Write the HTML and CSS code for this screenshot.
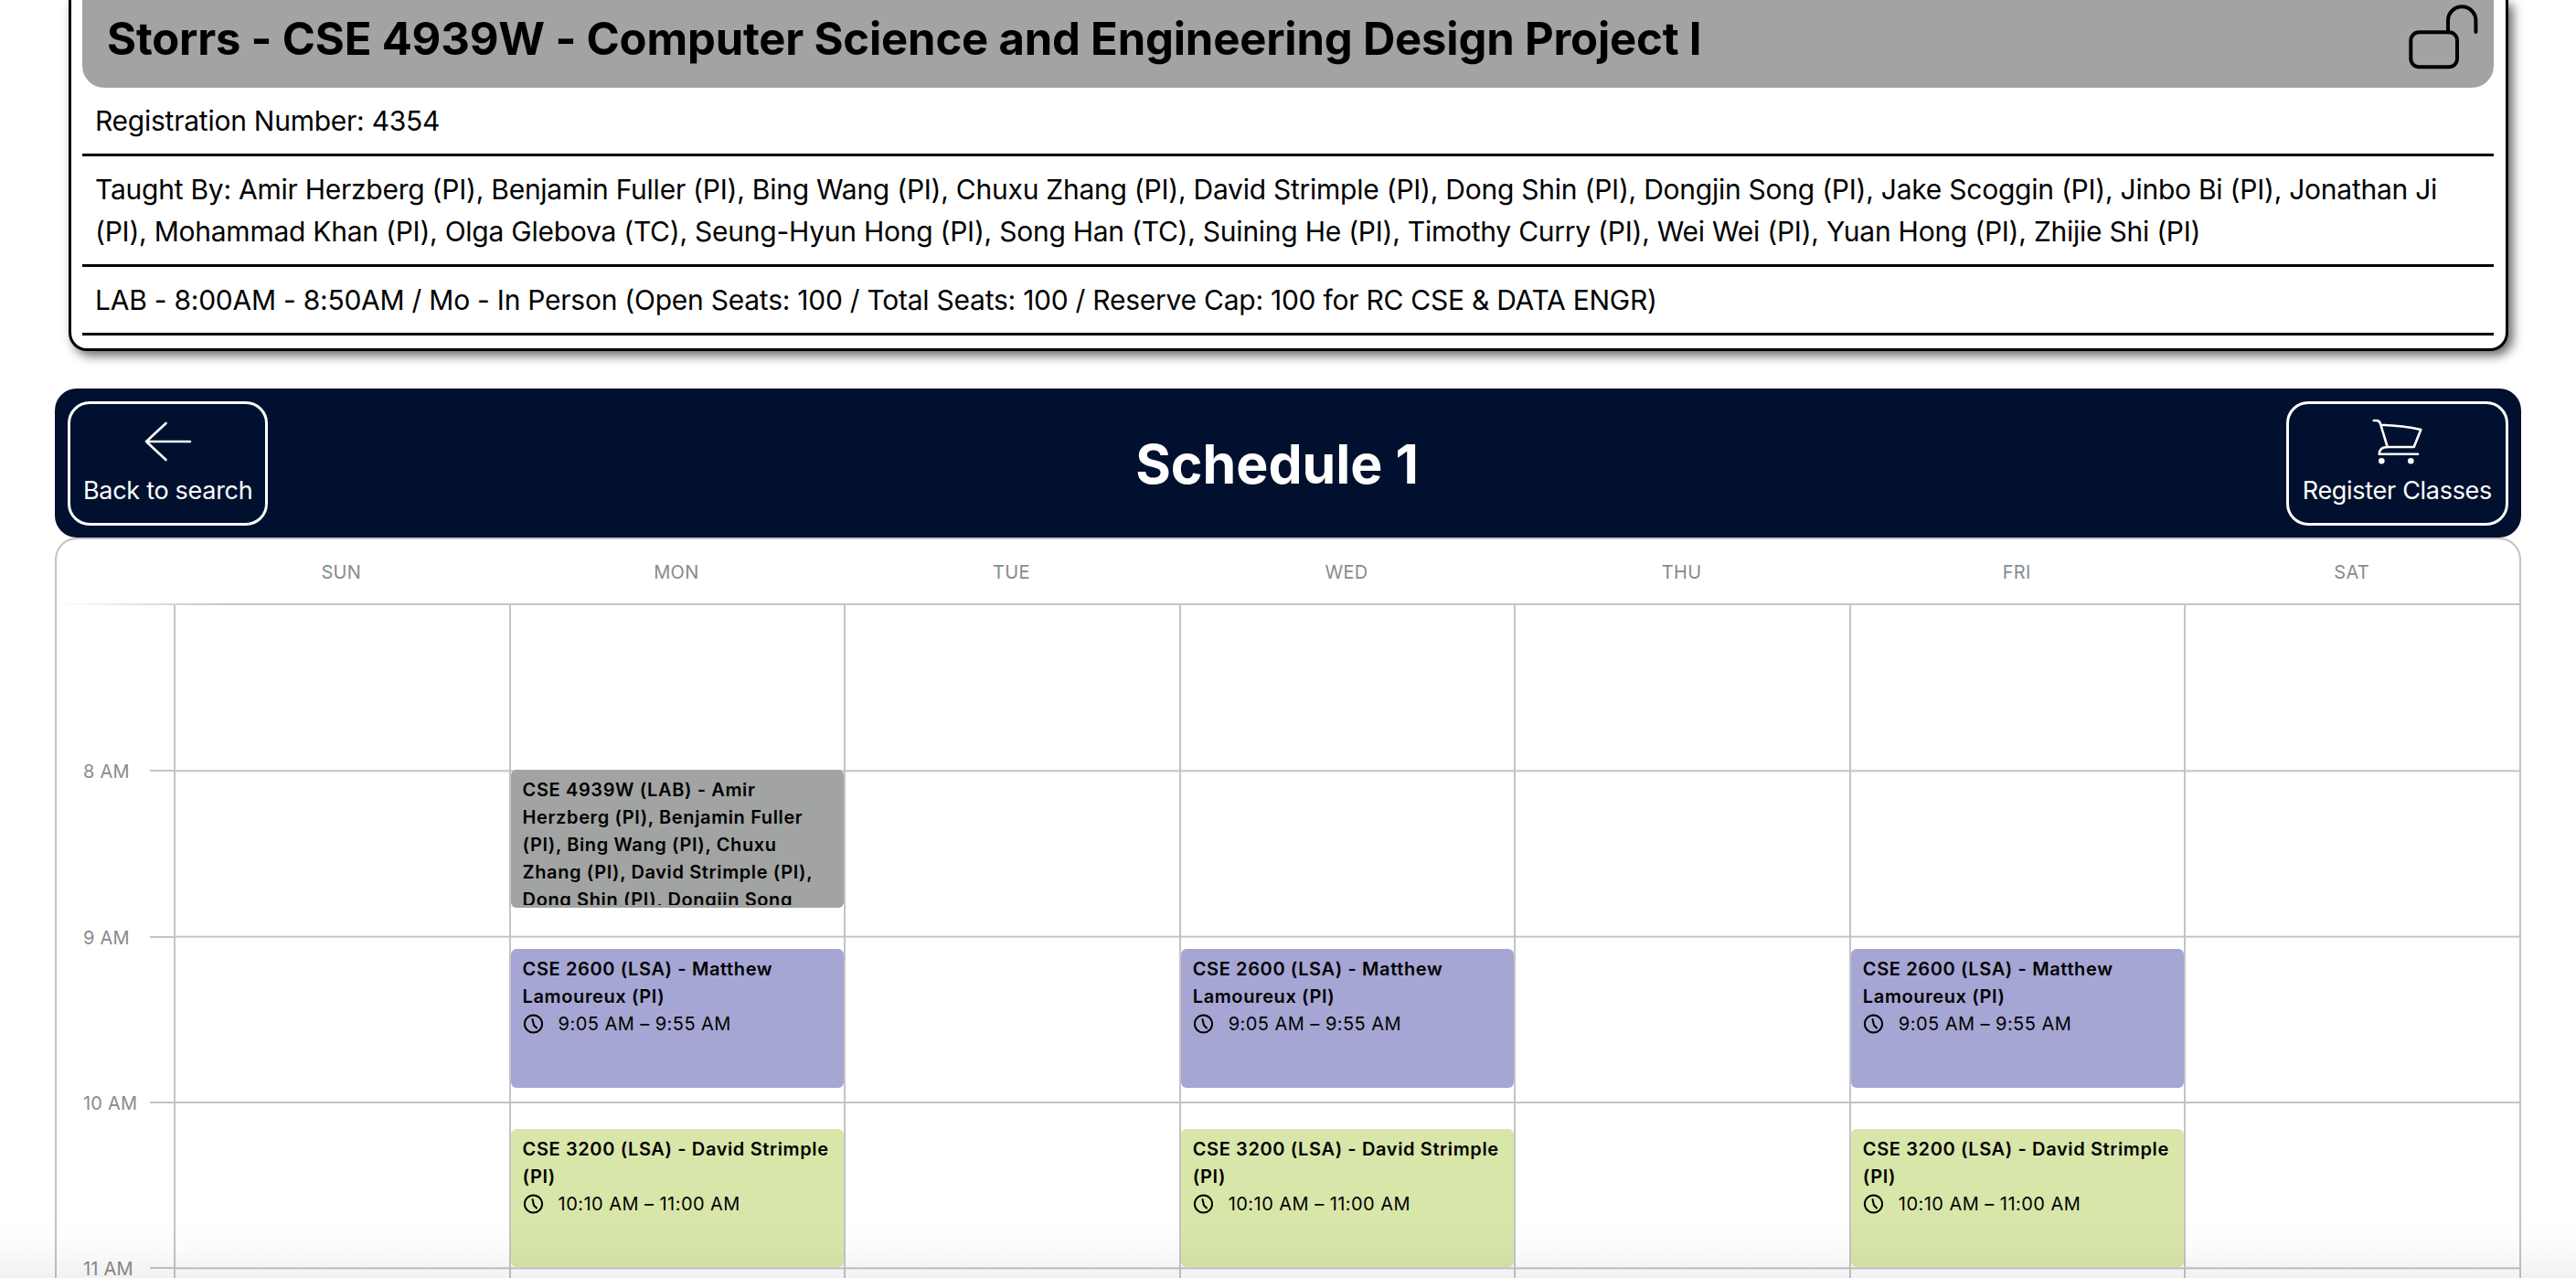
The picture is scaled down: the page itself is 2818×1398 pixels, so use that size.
FILE: index.html
```html
<!DOCTYPE html>
<html lang="en">

<head>
    <meta charset="UTF-8">
    <title>Schedule 1</title>
    <link rel="stylesheet" href="styles.css">
</head>

<body>
    <div class="page">
        <!-- course details -->
        <div class="course-card">
            <div class="course-head">
                <h2 class="course-title">Storrs - CSE 4939W - Computer Science and Engineering Design Project I</h2>
                <svg class="lock-icon" width="82" height="80" viewBox="0 0 82 80" fill="none" stroke="#000" stroke-width="4" stroke-linecap="round">
                    <rect x="7.3" y="35.3" width="50.7" height="38" rx="9"></rect>
                    <path d="M48 35V22.5a15.2 15.2 0 0 1 30.4 0V35"></path>
                </svg>
            </div>
            <div class="course-row">Registration Number: 4354</div>
            <div class="course-row">Taught By: Amir Herzberg (PI), Benjamin Fuller (PI), Bing Wang (PI), Chuxu Zhang (PI), David Strimple (PI), Dong Shin (PI), Dongjin Song (PI), Jake Scoggin (PI), Jinbo Bi (PI), Jonathan Ji (PI), Mohammad Khan (PI), Olga Glebova (TC), Seung-Hyun Hong (PI), Song Han (TC), Suining He (PI), Timothy Curry (PI), Wei Wei (PI), Yuan Hong (PI), Zhijie Shi (PI)</div>
            <div class="course-row">LAB - 8:00AM - 8:50AM / Mo - In Person (Open Seats: 100 / Total Seats: 100 / Reserve Cap: 100 for RC CSE &amp; DATA ENGR)</div>
        </div>

        <!-- schedule bar -->
        <div class="schedule-bar">
            <a class="bar-btn" href="#">
                <svg width="64" height="56" viewBox="0 0 64 56" fill="none" stroke="#fff" stroke-width="2.6" stroke-linecap="round" stroke-linejoin="round">
                    <path d="M8 29H56M29.5 9L8 29L29.5 49"></path>
                </svg>
                <span>Back to search</span>
            </a>
            <h1 class="schedule-title">Schedule 1</h1>
            <a class="bar-btn" href="#">
                <svg width="64" height="56" viewBox="0 0 64 56" fill="none" stroke="#fff" stroke-width="2.6" stroke-linecap="round" stroke-linejoin="round">
                    <path d="M6.7 6H9.5Q13 6 14 9.5L21.7 35H50.7L58.3 16Q40 11.5 14.5 10.7"></path>
                    <path d="M21.7 35Q13 35 12.7 42.7H55"></path>
                    <circle cx="15.3" cy="50.3" r="3.3" fill="#fff" stroke="none"></circle>
                    <circle cx="47.3" cy="50.3" r="3.3" fill="#fff" stroke="none"></circle>
                </svg>
                <span>Register Classes</span>
            </a>
        </div>

        <!-- calendar -->
        <div class="calendar">
            <div class="day-head">
                <div></div>
                <div>Sun</div>
                <div>Mon</div>
                <div>Tue</div>
                <div>Wed</div>
                <div>Thu</div>
                <div>Fri</div>
                <div>Sat</div>
            </div>
            <div class="week">
                <div class="hours">
                    <div class="hour"></div>
                    <div class="hour"><span>8 AM</span></div>
                    <div class="hour"><span>9 AM</span></div>
                    <div class="hour"><span>10 AM</span></div>
                    <div class="hour"><span>11 AM</span></div>
                </div>
                <div class="day"></div>
                <div class="day">
                    <div class="event ev-lab">
                        <div class="ev-title">CSE 4939W (LAB) - Amir Herzberg (PI), Benjamin Fuller (PI), Bing Wang (PI), Chuxu Zhang (PI), David Strimple (PI), Dong Shin (PI), Dongjin Song (PI), Jake Scoggin (PI)</div>
                    </div>
                    <div class="event ev-2600">
                        <div class="ev-title">CSE 2600 (LSA) - Matthew Lamoureux (PI)</div>
                        <div class="ev-time">
                            <svg class="clock" viewBox="0 0 22 22" fill="none" stroke="#000" stroke-width="2" stroke-linecap="round" stroke-linejoin="round"><circle cx="11.5" cy="11" r="9.6"></circle><path d="M10.5 6L12 12.5L15 15.5"></path></svg>
                            9:05 AM – 9:55 AM
                        </div>
                    </div>
                    <div class="event ev-3200">
                        <div class="ev-title">CSE 3200 (LSA) - David Strimple (PI)</div>
                        <div class="ev-time">
                            <svg class="clock" viewBox="0 0 22 22" fill="none" stroke="#000" stroke-width="2" stroke-linecap="round" stroke-linejoin="round"><circle cx="11.5" cy="11" r="9.6"></circle><path d="M10.5 6L12 12.5L15 15.5"></path></svg>
                            10:10 AM – 11:00 AM
                        </div>
                    </div>
                </div>
                <div class="day"></div>
                <div class="day">
                    <div class="event ev-2600">
                        <div class="ev-title">CSE 2600 (LSA) - Matthew Lamoureux (PI)</div>
                        <div class="ev-time">
                            <svg class="clock" viewBox="0 0 22 22" fill="none" stroke="#000" stroke-width="2" stroke-linecap="round" stroke-linejoin="round"><circle cx="11.5" cy="11" r="9.6"></circle><path d="M10.5 6L12 12.5L15 15.5"></path></svg>
                            9:05 AM – 9:55 AM
                        </div>
                    </div>
                    <div class="event ev-3200">
                        <div class="ev-title">CSE 3200 (LSA) - David Strimple (PI)</div>
                        <div class="ev-time">
                            <svg class="clock" viewBox="0 0 22 22" fill="none" stroke="#000" stroke-width="2" stroke-linecap="round" stroke-linejoin="round"><circle cx="11.5" cy="11" r="9.6"></circle><path d="M10.5 6L12 12.5L15 15.5"></path></svg>
                            10:10 AM – 11:00 AM
                        </div>
                    </div>
                </div>
                <div class="day"></div>
                <div class="day">
                    <div class="event ev-2600">
                        <div class="ev-title">CSE 2600 (LSA) - Matthew Lamoureux (PI)</div>
                        <div class="ev-time">
                            <svg class="clock" viewBox="0 0 22 22" fill="none" stroke="#000" stroke-width="2" stroke-linecap="round" stroke-linejoin="round"><circle cx="11.5" cy="11" r="9.6"></circle><path d="M10.5 6L12 12.5L15 15.5"></path></svg>
                            9:05 AM – 9:55 AM
                        </div>
                    </div>
                    <div class="event ev-3200">
                        <div class="ev-title">CSE 3200 (LSA) - David Strimple (PI)</div>
                        <div class="ev-time">
                            <svg class="clock" viewBox="0 0 22 22" fill="none" stroke="#000" stroke-width="2" stroke-linecap="round" stroke-linejoin="round"><circle cx="11.5" cy="11" r="9.6"></circle><path d="M10.5 6L12 12.5L15 15.5"></path></svg>
                            10:10 AM – 11:00 AM
                        </div>
                    </div>
                </div>
                <div class="day"></div>
            </div>
        </div>
        <div class="bottom-fade"></div>
    </div>
</body>

</html>
```

FILE: styles.css
```css
* {
    margin: 0;
    padding: 0;
    box-sizing: border-box;
}

body {
    background-color: #fff;
    font-family: Inter, "Liberation Sans", sans-serif;
    color: #000;
}

.page {
    position: relative;
    height: 1398px;
    padding: 0 60px;
    overflow: hidden;
}

/* course card */
.course-card {
    margin: 0 14px 41px 15px;
    height: 384px;
    padding: 0 13px 0 12px;
    background-color: #fff;
    border: 3px solid #000;
    border-top: 0;
    border-radius: 0 0 20px 20px;
    box-shadow: 5px 5px 12px rgba(0, 0, 0, .6);
}

.course-head {
    display: flex;
    justify-content: space-between;
    align-items: flex-start;
    height: 96px;
    padding: 0 16px 0 27px;
    background-color: #a2a4a3;
    border-radius: 0 0 24px 24px;
}

.course-title {
    margin-top: 17px;
    font-size: 49px;
    line-height: 52px;
    font-weight: 700;
    letter-spacing: -.19px;
}

.course-row {
    padding: 13px 14px;
    border-bottom: 3px solid #000;
    font-size: 30px;
    line-height: 46px;
    letter-spacing: -.25px;
}

/* schedule header */
.schedule-bar {
    display: flex;
    justify-content: space-between;
    align-items: center;
    height: 163px;
    padding: 0 14px;
    background-color: #00102e;
    border-radius: 24px;
}

.bar-btn {
    display: flex;
    flex-direction: column;
    align-items: center;
    justify-content: flex-end;
    height: 136px;
    padding: 0 14px 17px;
    border: 3px solid #fff;
    border-radius: 24px;
    color: #fff;
    font-size: 27px;
    line-height: 36px;
    letter-spacing: -.3px;
    text-decoration: none;
}

.bar-btn:last-child {
    padding: 0 15px 17px;
}

.bar-btn svg {
    margin-bottom: 9px;
}

.schedule-title {
    padding-top: 2px;
    color: #fff;
    font-size: 59px;
    font-weight: 700;
}

/* calendar */
.calendar {
    height: 830px;
    border: 2px solid #c4c4c4;
    border-bottom: 0;
    border-radius: 24px 24px 0 0;
}

.day-head {
    display: grid;
    grid-template-columns: 128px repeat(7, 1fr);
    align-items: center;
    height: 72px;
    padding-bottom: 1px;
    background-image: linear-gradient(to right, #fff, #c4c4c4 190px);
    background-size: 100% 2px;
    background-position: bottom;
    background-repeat: no-repeat;
    color: #8a8a8e;
    font-size: 20px;
    letter-spacing: .3px;
    text-align: center;
    text-transform: uppercase;
}

.week {
    display: grid;
    grid-template-columns: 128px repeat(7, 1fr);
}

.hour {
    position: relative;
    height: 181.33px;
}

.hour:first-child {
    height: 180.33px;
}

.hour span {
    position: absolute;
    left: 29px;
    top: -11px;
    color: #8a8a8e;
    font-size: 20px;
    line-height: 26px;
    letter-spacing: .2px;
}

.hour::after {
    content: "";
    position: absolute;
    top: 0;
    left: 102px;
    right: 0;
    height: 2px;
    background-color: #c4c4c4;
}

.hour:first-child::after {
    display: none;
}

/* white strip keeps the hour line off the header line */
.day {
    position: relative;
    height: 800px;
    border-left: 2px solid #c4c4c4;
    background-image: linear-gradient(#fff, #fff), linear-gradient(#c4c4c4 2px, transparent 2px);
    background-size: 100% 1px, 100% 181.33px;
    background-position: 0 0, 0 180.33px;
    background-repeat: no-repeat, repeat-y;
}

/* placed by start time, 181.33px to the hour */
.event {
    position: absolute;
    left: 0;
    right: 0;
    padding: 7px 13px 3px;
    border-radius: 6px;
    overflow: hidden;
    font-size: 20px;
    line-height: 30px;
    letter-spacing: .45px;
}

.ev-title {
    font-weight: 600;
    letter-spacing: .62px;
    height: 100%;
    overflow: hidden;
}

.ev-lab {
    top: 180px;
    height: 151px;
    background-color: #a2a4a3;
}

.ev-2600 {
    top: 376px;
    height: 152px;
    background-color: #a6a6d4;
}

.ev-2600 .ev-title,
.ev-3200 .ev-title {
    height: auto;
}

.ev-3200 {
    top: 573px;
    height: 151px;
    background-color: #d9e6aa;
}

.ev-time {
    display: flex;
    align-items: center;
    gap: 17px;
}

.clock {
    width: 22px;
    height: 22px;
}

/* fade at the foot of the page */
.bottom-fade {
    position: absolute;
    left: 0;
    right: 0;
    bottom: 0;
    height: 70px;
    background-image: linear-gradient(rgba(0, 0, 0, 0), rgba(0, 0, 0, .01) 50%, rgba(0, 0, 0, .055));
}
```
